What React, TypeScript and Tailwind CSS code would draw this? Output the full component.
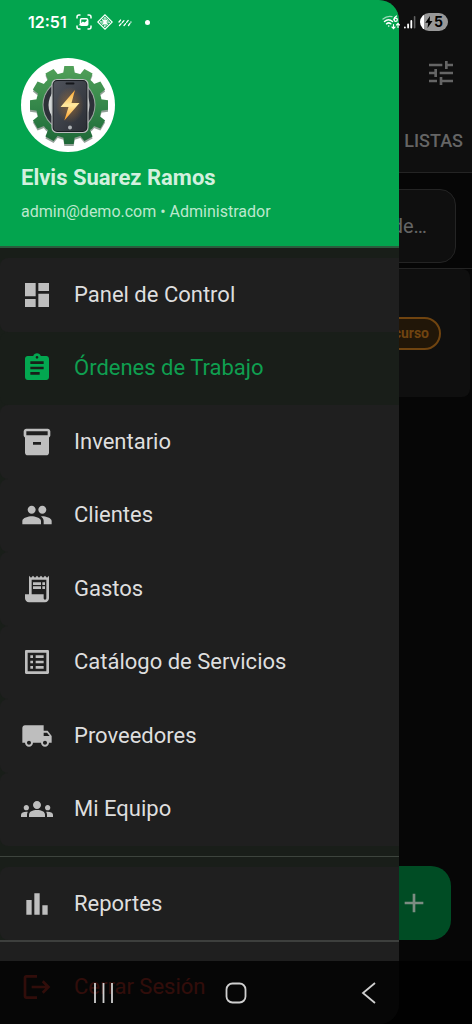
import {
  MdAdd,
  MdAssignment,
  MdBarChart,
  MdDashboard,
  MdGroups,
  MdInventory2,
  MdListAlt,
  MdLocalShipping,
  MdLogout,
  MdPeople,
  MdReceiptLong,
  MdTune,
} from "react-icons/md"
import type { IconType } from "react-icons"
import clsx from "clsx"

interface MenuItem {
  label: string
  icon: IconType
  active?: boolean
}

const menuItems: MenuItem[] = [
  { label: "Panel de Control", icon: MdDashboard },
  { label: "Órdenes de Trabajo", icon: MdAssignment, active: true },
  { label: "Inventario", icon: MdInventory2 },
  { label: "Clientes", icon: MdPeople },
  { label: "Gastos", icon: MdReceiptLong },
  { label: "Catálogo de Servicios", icon: MdListAlt },
  { label: "Proveedores", icon: MdLocalShipping },
  { label: "Mi Equipo", icon: MdGroups },
]

// Gear teeth, one every 30 degrees
const teeth = [0, 30, 60, 90, 120, 150, 180, 210, 240, 270, 300, 330]

function Logo() {
  return (
    <svg viewBox="0 0 94 94" className="size-[94px]" role="img" aria-label="Logo">
      <defs>
        <linearGradient id="gear" x1="0" y1="0" x2="0" y2="1">
          <stop offset="0" stopColor="#57a65c" />
          <stop offset="0.5" stopColor="#35874a" />
          <stop offset="1" stopColor="#176032" />
        </linearGradient>
        <linearGradient id="phone" x1="0" y1="0" x2="1" y2="1">
          <stop offset="0" stopColor="#50545c" />
          <stop offset="1" stopColor="#2b2e35" />
        </linearGradient>
        <linearGradient id="bolt" x1="0" y1="0" x2="0" y2="1">
          <stop offset="0" stopColor="#ffa62b" />
          <stop offset="0.5" stopColor="#ffe9a0" />
          <stop offset="1" stopColor="#ff9a1f" />
        </linearGradient>
        <radialGradient id="glow">
          <stop offset="0" stopColor="#e08a28" stopOpacity="0.45" />
          <stop offset="1" stopColor="#e08a28" stopOpacity="0" />
        </radialGradient>
        <mask id="gearShape">
          <circle cx="48" cy="47" r="33" fill="#fff" />
          {teeth.map((angle) => (
            <path key={angle} d="M42 17l1.300-9h9.400l1.300 9z" fill="#fff" transform={`rotate(${angle} 48 47)`} />
          ))}
        </mask>
      </defs>
      <circle cx="47" cy="47" r="47" fill="#fff" />
      <g transform="translate(0 2)" opacity="0.45">
        <rect width="94" height="94" fill="#12301d" mask="url(#gearShape)" />
      </g>
      <rect width="94" height="94" fill="url(#gear)" mask="url(#gearShape)" />
      <circle cx="48" cy="47" r="26.500" fill="#9fa8a3" />
      <circle cx="48" cy="47" r="25.500" fill="#2d3138" />
      <circle cx="48" cy="47" r="20.500" fill="#d5d8d8" />
      <rect x="31" y="21.500" width="36" height="53" rx="5" fill="#1a1d22" stroke="#b9bdbd" strokeWidth="1.200" />
      <rect x="32.500" y="23" width="33" height="50" rx="4" fill="url(#phone)" />
      <rect x="44.500" y="24.500" width="9" height="2" rx="1" fill="#15171b" />
      <ellipse cx="49" cy="47" rx="14" ry="18" fill="url(#glow)" />
      <path d="M54 32L39.500 49h8l-4.200 13.500L58.500 45h-8z" fill="url(#bolt)" />
      <circle cx="49" cy="69.500" r="2" fill="#aeb2b5" />
    </svg>
  )
}

function StatusBar() {
  return (
    <div className="absolute inset-x-0 top-0 z-30 flex h-11 items-center justify-between pr-6 pl-7 text-white">
      <div className="flex items-center gap-[5px]">
        <span className="mr-1 font-[Inter,sans-serif] text-base font-semibold">12:51</span>
        <svg viewBox="0 0 16 16" className="size-4" fill="none" stroke="currentColor" strokeWidth="1.500">
          <path d="M1 4.500V3a2 2 0 0 1 2-2h1.500M11.500 1H13a2 2 0 0 1 2 2v1.500M15 11.500V13a2 2 0 0 1-2 2h-1.500M4.500 15H3a2 2 0 0 1-2-2v-1.500" />
          <rect x="4.500" y="4.800" width="7" height="6.400" rx="1" />
          <path d="M4.500 10.500l2.500-2 1.500 1 3-2.500v3.500z" fill="currentColor" />
        </svg>
        <svg viewBox="0 0 16 16" className="size-4" fill="none" stroke="currentColor">
          <path d="M8 .8L15.200 8 8 15.200.8 8z" strokeWidth="1.200" />
          <path d="M5.500 5.500l5 5M8 3.500v4.500M3.500 8h4.500M10.500 5.500L8 8l-2.500 2.500M8 8v4.500M8 8h4.500" strokeWidth="1.100" />
          <path d="M8 3.300l4.700 4.700L8 12.700 3.300 8z" strokeDasharray="2 1.200" strokeWidth="1" />
        </svg>
        <svg viewBox="0 0 14 9" className="h-[9px] w-3.5" stroke="currentColor" strokeWidth="1.300" strokeLinecap="round">
          <path d="M1 4l2-2.500M1.500 7.500L7 1.500M6 7.500L11 1.500M10.500 7.500L13 4" strokeDasharray="2.500 1.600" />
        </svg>
        <span className="ml-2 size-[5px] rounded-full bg-white" />
      </div>
      <div className="flex items-center gap-1">
        <svg viewBox="0 0 18 15" className="h-[15px] w-[18px]" fill="none" stroke="currentColor" strokeWidth="1.300" strokeLinecap="round">
          <path d="M1 4Q5 .5 10 1.600" opacity=".6" />
          <path d="M2.500 6.500q4-3.500 8 0M4.500 8.800q2.200-1.800 4.300 0" strokeWidth="1.500" />
          <circle cx="6.700" cy="11" r=".8" fill="currentColor" stroke="none" />
          <path d="M14.500 1Q12 2.500 12 4.500" />
          <circle cx="13.700" cy="4.700" r="1.600" />
          <path d="M11.500 9.500v4M10 12l1.500 1.600L13 12M16 12.500v-4M14.500 10L16 8.400l1.500 1.600" strokeWidth="1.100" />
        </svg>
        <svg viewBox="0 0 12 13" className="h-[13px] w-3" fill="currentColor">
          <rect x="0" y="10.500" width="1.800" height="2" rx=".9" />
          <rect x="3.200" y="7.500" width="1.800" height="5" rx=".9" />
          <rect x="6.400" y="4" width="1.800" height="8.500" rx=".9" />
          <rect x="9.800" y="0" width="1.600" height="12.500" rx=".8" opacity=".35" />
        </svg>
        <span className="flex h-[18px] w-7 items-center justify-center gap-px rounded-full bg-linear-to-r from-white from-15% to-[#989898] to-15% text-black">
          <svg viewBox="0 0 8 12" className="h-3 w-2" fill="currentColor">
            <path d="M5 0L.3 6.800h2.900L2.500 12l5-7H4.700z" />
          </svg>
          <span className="font-[Inter,sans-serif] text-sm leading-none font-bold">5</span>
        </span>
      </div>
    </div>
  )
}

function MenuRow({ item }: { item: MenuItem }) {
  const Icon = item.icon
  return (
    <li className="flex">
      <a
        href="#"
        aria-current={item.active ? "page" : undefined}
        className={clsx(
          "flex w-full items-center gap-[21px] rounded-l-lg px-[21px] text-[22px] leading-7",
          item.active ? "bg-[#191e19] text-[#0f9f50]" : "bg-[#1f1f1f] text-[#dedede]",
        )}
      >
        <Icon className={clsx("size-8 shrink-0", item.active ? "text-[#03a750]" : "text-[#bebebe]")} />
        {item.label}
      </a>
    </li>
  )
}

function Drawer() {
  return (
    <aside className="absolute inset-y-0 left-0 z-10 flex w-[399px] max-w-[85%] flex-col overflow-hidden rounded-r-[20px] bg-[#191e19]">
      <header className="border-b-2 border-[#2b5b3d] bg-[#03a44e] px-[21px] pt-[58px] pb-[22px]">
        <Logo />
        <h1 className="mt-3 text-[22px] leading-7 font-bold text-[#d2f0de]">Elvis Suarez Ramos</h1>
        <p className="mt-2 text-base leading-6 text-[#bce8cd]">admin@demo.com • Administrador</p>
      </header>
      <nav className="pt-2.5">
        <ul className="grid h-[588px] auto-rows-fr">
          {menuItems.map((item) => (
            <MenuRow key={item.label} item={item} />
          ))}
        </ul>
        <hr className="my-2.5 border-[#3d443d]" />
        <ul className="grid h-[73px]">
          <MenuRow item={{ label: "Reportes", icon: MdBarChart }} />
        </ul>
      </nav>
      <div className="grow border-t-2 border-[#3d3f3d] bg-[#1f1f1f] pt-2">
        <button className="flex h-[73px] w-full items-center gap-[21px] px-[21px] text-[22px] leading-7 text-[#f44336]">
          <MdLogout className="size-8 shrink-0" />
          Cerrar Sesión
        </button>
      </div>
    </aside>
  )
}

function OrdersPage() {
  return (
    <main className="flex h-full flex-col bg-[#060606]">
      <div className="border-b border-[#242424] bg-[#0f0f0f] pt-[53px] text-[#656565]">
        <div className="flex justify-end px-[15px]">
          <button aria-label="Filtros" className="flex h-10 items-center">
            <MdTune className="size-8" />
          </button>
        </div>
        <div className="flex h-[79px] items-center justify-end px-[9px] pt-4">
          <button className="h-12 text-lg font-medium">LISTAS</button>
        </div>
      </div>
      <div className="border-b border-[#242424] px-4 pt-4 pb-[5px]">
        <input
          aria-label="Buscar"
          placeholder="Buscar por cliente, equipo, número de…"
          className="h-[74px] w-full rounded-2xl border border-[#242424] bg-[#0f0f0f] pr-7 text-right text-xl text-[#656565] placeholder:text-[#656565]"
        />
      </div>
      <div className="mr-0.5 flex h-32 items-center justify-end rounded-lg bg-[#0f0f0f] pr-[29px]">
        <span className="flex h-[33px] items-center rounded-full border-2 border-[#704410] bg-[#211608] px-2.5 text-sm font-bold text-[#704410]">
          En curso
        </span>
      </div>
      <button
        aria-label="Nueva orden"
        className="absolute right-[21px] bottom-[84px] flex size-[74px] items-center justify-center rounded-[20px] bg-[#004c24] text-[#7c8c82]"
      >
        <MdAdd className="size-8" />
      </button>
    </main>
  )
}

function NavigationBar() {
  return (
    <div className="absolute inset-x-0 bottom-0 z-20 flex h-[63px] items-center justify-between bg-black/80 px-[91px] text-[#cfcfcf]">
      <button aria-label="Recientes">
        <svg viewBox="0 0 24 24" className="size-6" stroke="currentColor" strokeWidth="1.800">
          <path d="M4 2v20M12.500 2v20M21 2v20" />
        </svg>
      </button>
      <button aria-label="Inicio">
        <svg viewBox="0 0 24 24" className="size-6" fill="none" stroke="currentColor" strokeWidth="1.800">
          <rect x="2.500" y="2.500" width="19" height="19" rx="6" />
        </svg>
      </button>
      <button aria-label="Atrás">
        <svg viewBox="0 0 24 24" className="size-6" fill="none" stroke="currentColor" strokeWidth="1.800">
          <path d="M18 2L6 12l12 10" />
        </svg>
      </button>
    </div>
  )
}

export default function App() {
  return (
    <div className="relative h-screen overflow-hidden bg-black font-[Roboto,sans-serif]">
      <OrdersPage />
      <Drawer />
      <StatusBar />
      <NavigationBar />
    </div>
  )
}
